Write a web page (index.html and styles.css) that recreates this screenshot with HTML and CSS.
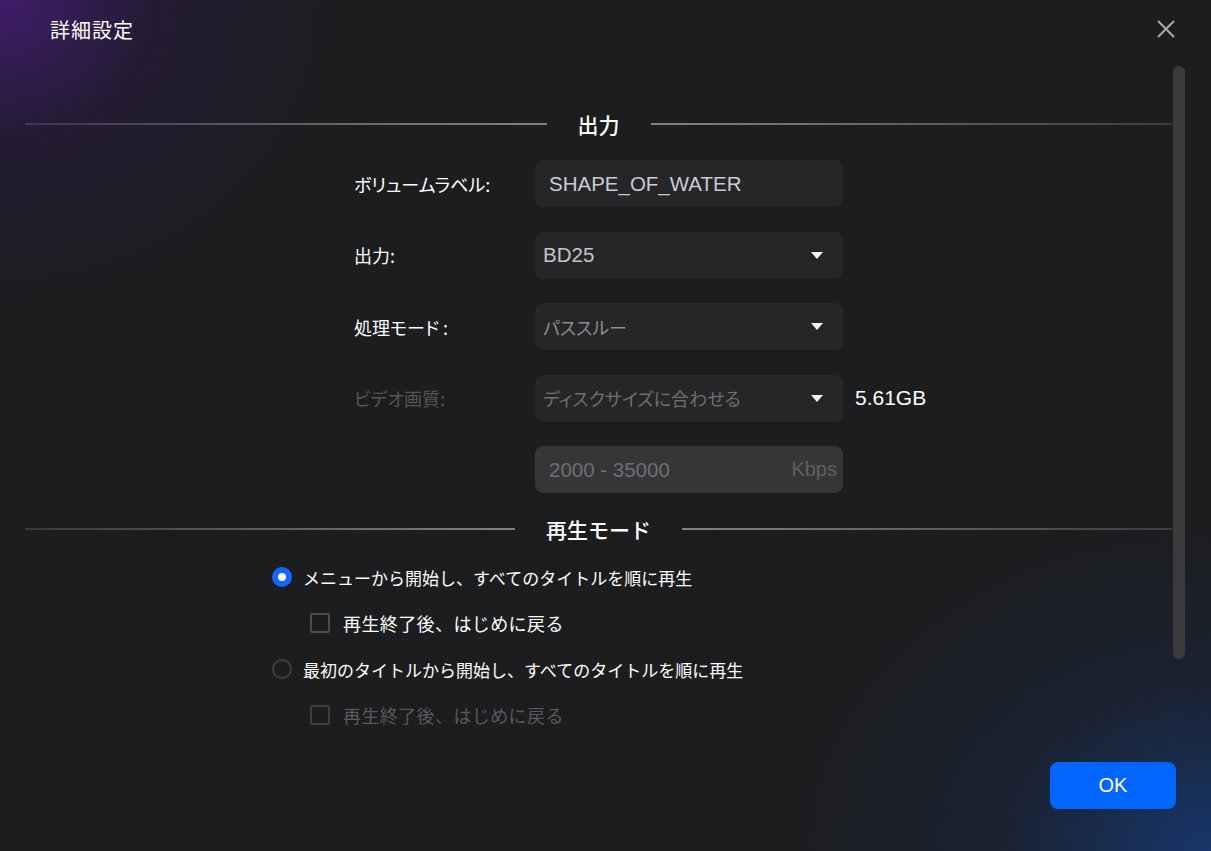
FILE: index.html
```html
<!DOCTYPE html>
<html lang="ja">
<head>
    <meta charset="UTF-8">
    <title>詳細設定</title>
    <link rel="stylesheet" href="styles.css">
</head>
<body>
    <div class="dialog">
        <div class="header">
            <h1 class="title">詳細設定</h1>
            <button class="close" aria-label="close">
                <svg width="18" height="18" viewBox="0 0 18 18"><path d="M1 1L17 17M17 1L1 17" stroke="#a9a9ab" stroke-width="2" fill="none"/></svg>
            </button>
        </div>

        <div class="content">
            <div class="section-head">
                <span class="line left"></span>
                <span class="section-title">出力</span>
                <span class="line right"></span>
            </div>

            <div class="form">
                <div class="row">
                    <span class="label">ボリュームラベル:</span>
                    <div class="box"><span class="latin light">SHAPE_OF_WATER</span></div>
                </div>
                <div class="row">
                    <span class="label">出力:</span>
                    <div class="box select"><span class="latin grey">BD25</span><span class="arrow"></span></div>
                </div>
                <div class="row">
                    <span class="label">処理モード :</span>
                    <div class="box select"><span class="jp mid">パススルー</span><span class="arrow"></span></div>
                </div>
                <div class="row">
                    <span class="label disabled">ビデオ画質:</span>
                    <div class="box select"><span class="jp dim">ディスクサイズに合わせる</span><span class="arrow"></span></div>
                    <span class="size">5.61GB</span>
                </div>
                <div class="row">
                    <span class="label"></span>
                    <div class="box rate"><span class="latin dim">2000 - 35000</span><span class="unit">Kbps</span></div>
                </div>
            </div>

            <div class="section-head second">
                <span class="line left"></span>
                <span class="section-title">再生モード</span>
                <span class="line right"></span>
            </div>

            <div class="modes">
                <div class="option">
                    <span class="radio checked"></span>
                    <span>メニューから開始し、すべてのタイトルを順に再生</span>
                </div>
                <div class="option sub">
                    <span class="check"></span>
                    <span>再生終了後、はじめに戻る</span>
                </div>
                <div class="option">
                    <span class="radio"></span>
                    <span>最初のタイトルから開始し、すべてのタイトルを順に再生</span>
                </div>
                <div class="option sub disabled">
                    <span class="check"></span>
                    <span>再生終了後、はじめに戻る</span>
                </div>
            </div>
        </div>

        <div class="scrollbar"></div>

        <div class="footer">
            <button class="ok">OK</button>
        </div>
    </div>
</body>
</html>
```

FILE: styles.css
```css
html, body {
    margin: 0;
    padding: 0;
}
body {
    font-family: "Noto Sans CJK JP", "Liberation Sans", sans-serif;
    color: #fff;
    background: #1c1d1f;
}
.dialog {
    position: relative;
    width: 1211px;
    height: 851px;
    overflow: hidden;
    background:
        radial-gradient(ellipse 340px 300px at 0 0, rgba(70, 28, 120, 0.85), rgba(50, 25, 90, 0.35) 45%, rgba(28, 29, 31, 0) 100%),
        radial-gradient(ellipse 420px 330px at 100% 100%, rgba(22, 58, 120, 0.85), rgba(24, 45, 85, 0.35) 50%, rgba(28, 29, 31, 0) 100%),
        #1c1d1f;
}
.header {
    height: 58px;
    display: flex;
    align-items: center;
    justify-content: space-between;
    padding: 0 36px 0 50px;
}
.title {
    margin: 0;
    font-size: 20px;
    font-weight: 400;
    letter-spacing: 1px;
}
.close {
    background: none;
    border: 0;
    padding: 0;
    width: 18px;
    height: 18px;
    cursor: pointer;
}
.content {
    margin-left: 25px;
    width: 1147px;
    padding-top: 52px;
}
.section-head {
    display: flex;
    align-items: center;
    height: 28px;
}
.section-head.second {
    margin-top: 22px;
}
.line {
    flex: 1;
    height: 2px;
}
.line.left {
    background: linear-gradient(to right, rgba(255,255,255,0.12), rgba(255,255,255,0.45));
}
.line.right {
    background: linear-gradient(to right, rgba(255,255,255,0.45), rgba(255,255,255,0.14));
}
.section-title {
    padding: 0 31px;
    font-size: 21px;
    font-weight: 500;
    line-height: 28px;
}
.form {
    width: 489px;
    margin: 22px auto 0;
    display: flex;
    flex-direction: column;
    gap: 24.5px;
}
.row {
    display: flex;
    align-items: center;
    height: 47px;
}
.label {
    width: 181px;
    flex: none;
    font-size: 18px;
    font-feature-settings: "palt";
}
.label.disabled {
    color: #555658;
}
.box {
    width: 308px;
    height: 47px;
    box-sizing: border-box;
    flex: none;
    display: flex;
    align-items: center;
    justify-content: space-between;
    padding: 0 14px;
    background: #262628;
    border-radius: 8px;
}
.box.select {
    padding: 0 20px 0 8px;
}
.box.rate {
    background: #363638;
    padding: 0 6px 0 14px;
}
.latin {
    font-family: "Liberation Sans", sans-serif;
    font-size: 20.5px;
}
.jp {
    font-size: 18px;
    font-feature-settings: "palt";
}
.light {
    color: #c9ccd3;
}
.grey {
    color: #c4c4c6;
}
.mid {
    color: #8e8e90;
}
.dim {
    color: #6f6f71;
}
.unit {
    font-family: "Liberation Sans", sans-serif;
    font-size: 20px;
    color: #5f5f61;
}
.arrow {
    width: 0;
    height: 0;
    border-left: 6px solid transparent;
    border-right: 6px solid transparent;
    border-top: 7px solid #f2f2f2;
}
.size {
    width: 0;
    margin-left: 12px;
    white-space: nowrap;
    font-family: "Liberation Sans", sans-serif;
    font-size: 21px;
}
.modes {
    margin: 11px 0 0 247px;
}
.option {
    display: flex;
    align-items: center;
    height: 46px;
    font-size: 17px;
    gap: 11px;
}
.option.sub {
    padding-left: 38px;
    gap: 13px;
    font-size: 18px;
    letter-spacing: 0.4px;
}
.option.disabled {
    color: #59595b;
}
.radio {
    width: 20px;
    height: 20px;
    box-sizing: border-box;
    border-radius: 50%;
    border: 2px solid #3e3e40;
}
.radio.checked {
    border: 0;
    background: radial-gradient(circle, #fff 0 3.5px, #1466ff 4.5px);
}
.check {
    width: 20px;
    height: 20px;
    box-sizing: border-box;
    border: 2px solid #4d4d4f;
    border-radius: 2px;
}
.option.disabled .check {
    border-color: #3e3e40;
}
.scrollbar {
    position: absolute;
    left: 1173px;
    top: 66px;
    width: 12px;
    height: 593px;
    border-radius: 6px;
    background: #3b3b3d;
}
.footer {
    position: absolute;
    right: 35px;
    bottom: 42px;
}
.ok {
    width: 126px;
    height: 47px;
    border: 0;
    border-radius: 8px;
    background: #0066ff;
    color: #fff;
    font-family: "Liberation Sans", sans-serif;
    font-size: 20px;
}
```
